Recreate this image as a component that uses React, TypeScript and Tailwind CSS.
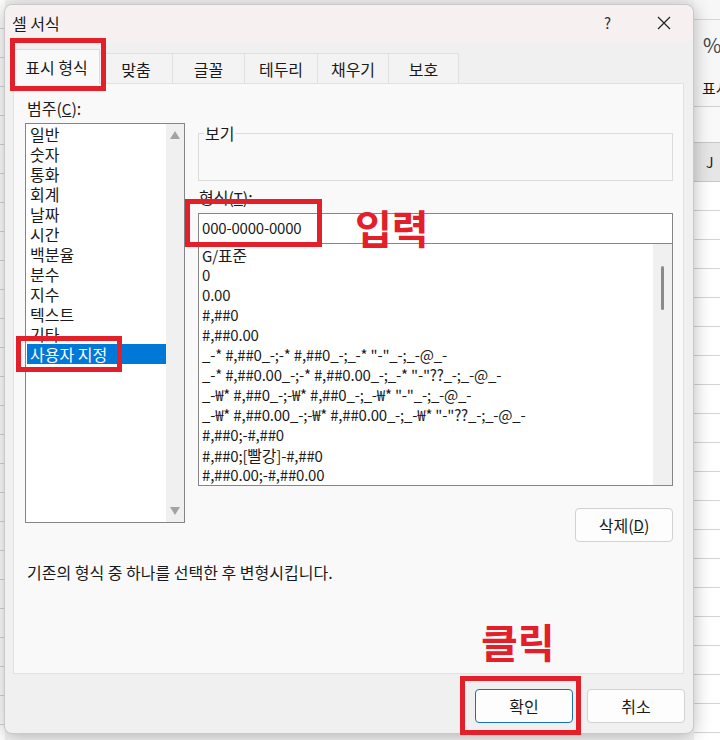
import React from "react";

const categories = ["일반", "숫자", "통화", "회계", "날짜", "시간", "백분율", "분수", "지수", "텍스트", "기타", "사용자 지정"];
const formats: React.ReactNode[] = [
  <>G/<span className="text-[16px]">표준</span></>,
  "0",
  "0.00",
  "#,##0",
  "#,##0.00",
  '_-* #,##0_-;-* #,##0_-;_-* "-"_-;_-@_-',
  '_-* #,##0.00_-;-* #,##0.00_-;_-* "-"??_-;_-@_-',
  '_-₩* #,##0_-;-₩* #,##0_-;_-₩* "-"_-;_-@_-',
  '_-₩* #,##0.00_-;-₩* #,##0.00_-;_-₩* "-"??_-;_-@_-',
  "#,##0;-#,##0",
  <>#,##0;[<span className="text-[16px]">빨강</span>]-#,##0</>,
  "#,##0.00;-#,##0.00",
];
const tabs = [
  { label: "표시 형식", w: "w-[87px]", active: true },
  { label: "맞춤", w: "w-[73px]" },
  { label: "글꼴", w: "w-[72px]" },
  { label: "테두리", w: "w-[73px]" },
  { label: "채우기", w: "w-[71px]" },
  { label: "보호", w: "w-[70px]" },
];

export default function App() {
  return (
    <div
      className="relative w-[720px] h-[740px] overflow-hidden bg-[#f3f3f3] text-[#1a1a1a]"
      style={{ fontFamily: "'Noto Sans CJK KR', 'Noto Sans', sans-serif" }}
    >
      {/* background spreadsheet strip on the right */}
      <div className="absolute left-[694px] top-0 w-[26px] h-[740px] flex flex-col bg-white overflow-hidden">
        <div className="h-[20px] shrink-0 border-b border-[#d6d6d6] bg-[#f7f7f7]" />
        <div className="h-[50px] shrink-0 bg-[#f7f7f7] flex items-center pl-[9px] text-[20px] text-[#444] whitespace-nowrap">%</div>
        <div className="h-[37px] shrink-0 bg-[#f7f7f7] flex items-center pl-[8px] text-[15px] border-b border-[#d0d0d0] whitespace-nowrap">표시</div>
        <div className="h-[35px] shrink-0 bg-[#f9f9f9]" />
        <div className="h-[40px] shrink-0 bg-[#e6e6e6] border-y border-[#c8c8c8] flex items-center pl-[12px] text-[14px]">J</div>
        {Array.from({ length: 20 }).map((_, i) => (
          <div key={i} className="h-[29px] border-b border-[#d4d4d4] bg-white shrink-0" />
        ))}
      </div>
      <div className="absolute left-0 top-0 w-[5px] h-[740px] flex flex-col bg-white overflow-hidden">
        {Array.from({ length: 26 }).map((_, i) => (
          <div key={i} className="h-[29px] border-b border-[#d4d4d4] shrink-0" />
        ))}
      </div>

      {/* dialog */}
      <div className="absolute left-[4px] top-[4px] w-[690px] h-[730px] rounded-[8px] bg-[#f0f0f0] border border-[#c9c9c9] shadow-[0_2px_18px_rgba(0,0,0,0.28)] flex flex-col">
        {/* title bar */}
        <div className="h-[36px] shrink-0 rounded-t-[8px] bg-[#f6f0f0] flex items-center relative">
          <span className="pl-[7px] text-[16px]">셀 서식</span>
          <span className="absolute left-[599px] top-[7px] text-[15px] text-[#333]">?</span>
          <svg className="absolute left-[652px] top-[11px]" width="14" height="14" viewBox="0 0 14 14">
            <path d="M1 1 L13 13 M13 1 L1 13" stroke="#222" strokeWidth="1.2" fill="none" />
          </svg>
        </div>

        {/* tabs */}
        <div className="mt-[8px] ml-[8px] h-[35px] flex items-end shrink-0">
          {tabs.map((t) => (
            <div
              key={t.label}
              className={
                t.active
                  ? `${t.w} h-[35px] bg-[#f9f9f9] border border-b-0 border-[#dcdcdc] flex items-center justify-center text-[16px] relative z-10 whitespace-nowrap`
                  : `${t.w} h-[31px] bg-[#f3f3f3] border-t border-r border-[#e0e0e0] flex items-center justify-center text-[16px] whitespace-nowrap`
              }
            >
              {t.label}
            </div>
          ))}
        </div>

        {/* tab panel */}
        <div className="ml-[8px] w-[671px] h-[591px] shrink-0 -mt-px bg-[#f9f9f9] border border-[#e1e1e1] pl-[11px] pt-[14px] flex flex-col">
          <div className="flex items-start gap-[13px]">
            {/* category column */}
            <div className="w-[160px] flex flex-col">
              <div className="h-[20px] leading-[20px] text-[16px] pl-[2px] whitespace-nowrap">
                범주(<span className="underline text-[15px]">C</span>):
              </div>
              <div className="mt-[5px] h-[400px] border border-[#858585] bg-white flex">
                <div className="flex-1 flex flex-col">
                  {categories.map((c, i) => (
                    <div
                      key={c}
                      className={
                        i === 11
                          ? "h-[20px] leading-[20px] text-[16px] pl-[3px] ml-px bg-[#0078d7] text-white whitespace-nowrap"
                          : "h-[20px] leading-[20px] text-[16px] pl-[4px] whitespace-nowrap"
                      }
                    >
                      {c}
                    </div>
                  ))}
                </div>
                <div className="w-[18px] bg-[#f0f0f0] flex flex-col items-center justify-between py-[7px]">
                  <svg width="10" height="8" viewBox="0 0 10 8">
                    <path d="M5 0 L10 8 L0 8 Z" fill="#a3a3a3" />
                  </svg>
                  <svg width="10" height="8" viewBox="0 0 10 8">
                    <path d="M0 0 L10 0 L5 8 Z" fill="#a3a3a3" />
                  </svg>
                </div>
              </div>
            </div>

            {/* right column */}
            <div className="w-[475px] flex flex-col">
              <div className="mt-[35px] h-[48px] border border-[#dcdcdc] relative">
                <span className="absolute left-[5px] -top-[11px] px-[1px] bg-[#f9f9f9] text-[16px] leading-[20px]">보기</span>
              </div>
              <div className="mt-[6px] h-[20px] leading-[20px] text-[16px] pl-[1px] whitespace-nowrap">
                형식(<span className="underline text-[15px]">T</span>):
              </div>
              <div className="mt-[6px] h-[31px] border border-[#858585] bg-white flex items-center pl-[3px] text-[15px] tracking-[-0.2px]">
                000-0000-0000
              </div>
              <div className="h-[242px] border border-t-0 border-[#858585] bg-white flex">
                <div className="flex-1 flex flex-col pt-px">
                  {formats.map((f, i) => (
                    <div key={i} className="h-[20px] leading-[20px] text-[15px] tracking-[-0.2px] pl-[3px] whitespace-pre">
                      {f}
                    </div>
                  ))}
                </div>
                <div className="w-[19px] bg-[#f0f0f0] flex justify-center pt-[22px]">
                  <div className="w-[3px] h-[44px] rounded-full bg-[#8a8a8a]" />
                </div>
              </div>
              <div className="mt-[22px] self-end w-[98px] h-[34px] rounded-[4px] border border-[#d2d2d2] bg-[#fdfdfd] flex items-center justify-center text-[16px] whitespace-nowrap">
                삭제(<span className="underline text-[15px]">D</span>)
              </div>
            </div>
          </div>
          <div className="mt-[20px] h-[20px] leading-[20px] text-[16px] pl-[2px] whitespace-nowrap">
            기존의 형식 중 하나를 선택한 후 변형시킵니다.
          </div>
        </div>

        {/* buttons */}
        <div className="mt-[15px] flex justify-end gap-[14px] pr-[8px]">
          <div className="w-[98px] h-[34px] rounded-[4px] border border-[#1a6fc0] bg-[#fdfdfd] flex items-center justify-center text-[16px]">
            확인
          </div>
          <div className="w-[98px] h-[34px] rounded-[4px] border border-[#d2d2d2] bg-[#fdfdfd] flex items-center justify-center text-[16px]">
            취소
          </div>
        </div>
      </div>

      {/* red annotations */}
      <div className="absolute left-[10px] top-[38px] w-[96px] h-[53px] border-[5px] border-[#e3202a] z-20" />
      <div className="absolute left-[16px] top-[336px] w-[106px] h-[36px] border-[5px] border-[#e3202a] z-20" />
      <div className="absolute left-[185px] top-[199px] w-[137px] h-[48px] border-[5px] border-[#e3202a] z-20" />
      <div className="absolute left-[460px] top-[676px] w-[121px] h-[59px] border-[5px] border-[#e3202a] z-20" />
      <div className="absolute left-[355px] top-[207px] text-[40px] font-bold leading-[40px] text-[#e3202a] z-20 whitespace-nowrap">입력</div>
      <div className="absolute left-[481px] top-[621px] text-[40px] font-bold leading-[40px] text-[#e3202a] z-20 whitespace-nowrap">클릭</div>
    </div>
  );
}
